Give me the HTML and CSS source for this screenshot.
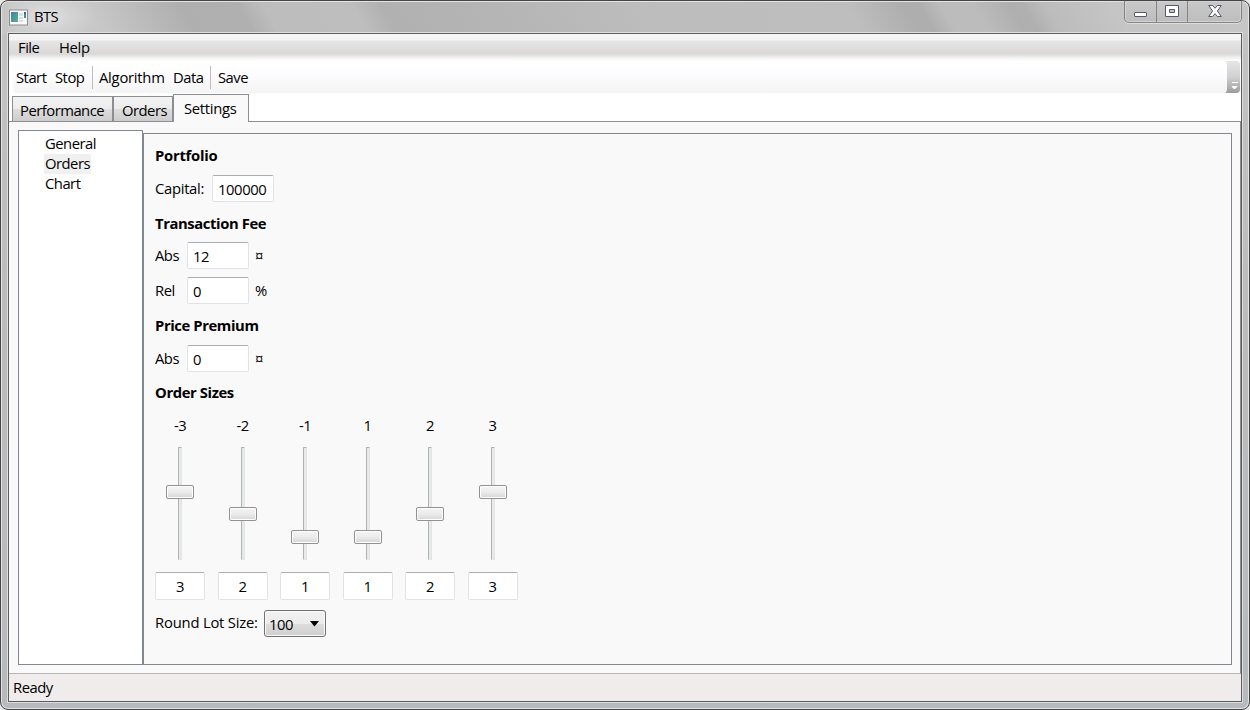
FILE: index.html
```html
<!DOCTYPE html>
<html lang="en">
<head>
<meta charset="utf-8">
<title>BTS</title>
<link rel="stylesheet" href="styles.css">
</head>
<body>
<div class="window">
  <header class="titlebar">
    <svg class="app-icon" width="20" height="17" viewBox="0 0 20 17">
      <defs><linearGradient id="g" x1="0" y1="0" x2="1" y2="1"><stop offset="0" stop-color="#4a7cae"/><stop offset="1" stop-color="#52b586"/></linearGradient></defs>
      <rect x=".5" y="1" width="18" height="15" fill="#fafafa" stroke="#8b8f94"/>
      <rect x="2" y="3" width="7" height="10" fill="url(#g)"/>
      <path d="M10 4h4v3h-4zM10 8h4v2h-4zM10 11h4v2h-4z" fill="#dedede"/>
      <rect x="15" y="3" width="2" height="6" fill="#438f9d"/><rect x="15" y="3" width="2" height="2" fill="#3a5f9a"/>
    </svg>
    <span class="title">BTS</span>
    <div class="caption">
      <button class="cap min" aria-label="Minimize"><svg width="14" height="7" viewBox="0 0 14 7"><rect x=".5" y="1.500" width="12" height="4" rx=".5" fill="#fff" stroke="#555a70"/></svg></button>
      <button class="cap max" aria-label="Maximize"><svg width="14" height="12" viewBox="0 0 14 12"><path fill="#fff" fill-rule="evenodd" stroke="#555a70" d="M.5.5h13v11H.5zM4.500 4.500v3h5v-3z"/></svg></button>
      <button class="cap close" aria-label="Close"><svg width="14" height="12" viewBox="0 0 14 12"><path fill="#fff" stroke="#555a70" d="M.7.500h4L7 3.300 9.300.500h4L9.400 6l3.900 5.500h-4L7 8.700 4.700 11.500h-4L4.600 6z"/></svg></button>
    </div>
  </header>
  <main class="client">
    <nav class="menu"><span class="m-file">File</span><span class="m-help">Help</span></nav>
    <div class="toolbar">
      <span class="t-start">Start</span><span class="t-stop">Stop</span><i class="sep"></i><span class="t-alg">Algorithm</span><span class="t-data">Data</span><i class="sep"></i><span class="t-save">Save</span>
      <svg class="overflow" width="16" height="32" viewBox="0 0 16 32"><defs><linearGradient id="o" x1="0" y1="0" x2="0" y2="1"><stop offset="0" stop-color="#e6e6e6"/><stop offset=".5" stop-color="#d0d0d0"/><stop offset="1" stop-color="#9c9c9c"/></linearGradient></defs><path d="M0 0h11q4 0 4 4v24q0 4-4 4H0q2-1 2-4V4q0-3-2-4z" fill="url(#o)"/><path d="M7 21.500h6" stroke="#fff"/><path d="M7 25.500h5l-2.500 2.500z" fill="#fff" stroke="#fff"/></svg>
    </div>
    <div class="tabs"><div class="tab perf"><span>Performance</span></div><div class="tab ord"><span>Orders</span></div><div class="tab active"><span>Settings</span></div></div>
    <section class="page">
      <ul class="tree"><li><span>General</span></li><li><span class="sel">Orders</span></li><li><span>Chart</span></li></ul>
      <div class="panel">
        <h2 class="h-port">Portfolio</h2>
        <div class="row"><label class="l-cap">Capital:</label><div class="box">100000</div></div>
        <h2 class="h-fee">Transaction Fee</h2>
        <div class="row fee"><label class="l-abs">Abs</label><div class="box">12</div><span class="unit">¤</span></div>
        <div class="row"><label class="l-abs">Rel</label><div class="box">0</div><span class="unit">%</span></div>
        <h2 class="h-prem">Price Premium</h2>
        <div class="row"><label class="l-abs">Abs</label><div class="box">0</div><span class="unit">¤</span></div>
        <h2 class="h-size">Order Sizes</h2>
        <div class="sliders">
          <div class="slider"><span class="name">-3</span><div class="track"><i class="thumb v3"></i></div><div class="box value">3</div></div>
          <div class="slider"><span class="name">-2</span><div class="track"><i class="thumb v2"></i></div><div class="box value">2</div></div>
          <div class="slider"><span class="name">-1</span><div class="track"><i class="thumb v1"></i></div><div class="box value">1</div></div>
          <div class="slider"><span class="name">1</span><div class="track"><i class="thumb v1"></i></div><div class="box value">1</div></div>
          <div class="slider"><span class="name">2</span><div class="track"><i class="thumb v2"></i></div><div class="box value">2</div></div>
          <div class="slider"><span class="name">3</span><div class="track"><i class="thumb v3"></i></div><div class="box value">3</div></div>
        </div>
        <div class="row lot"><label class="l-lot">Round Lot Size:</label><div class="combo"><span>100</span><svg width="9" height="6" viewBox="0 0 9 6"><path d="M0 0h9L4.500 5.500z"/></svg></div></div>
      </div>
    </section>
    <footer class="status">Ready</footer>
  </main>
</div>
</body>
</html>
```
FILE: styles.css
```css
* { box-sizing: border-box; }
body { margin: 0; width: 1250px; height: 710px; overflow: hidden; background: #e8e8e8; color: #000; font: 14.8px/18px "Open Sans", "Noto Sans", sans-serif; letter-spacing: -0.5px; }
span, label, h2 { white-space: nowrap; }
.window { height: 710px; border: 1px solid #454545; border-radius: 8px; padding: 0 7px 7px; display: flex; flex-direction: column; box-shadow: inset 0 0 0 1px #e4e4e4; background: linear-gradient(60deg, #c6c6c6 0, #c8c8c8 8%, #afafaf 15.5%, #b0b0b0 20%, #bdbdbd 22%, #bebebe 29%, #b1b1b1 31.3%, #b5b5b5 40%, #bdbdbd 52%, #bebebe 68%, #aeaeae 72.5%, #aeaeae 73.8%, #bcbcbc 75.5%, #bcbcbc 78%, #afafaf 81%, #b0b0b0 82%, #bcbcbc 83.7%, #c5c5c5 89%, #c6c6c6 100%) 0 0 / 100% 33px no-repeat, linear-gradient(#c3c3c3, #bbbbbb 50%, #b7babd); }
.titlebar { height: 32px; flex: none; display: flex; padding: 0 0 0 1px; background: radial-gradient(ellipse 50px 26px at 38px 16px, #e2e2e2 0, #dadada99 50%, #d4d4d400 100%); }
.app-icon { margin-top: 8px; }
.title { margin: 6px 0 0 5px; letter-spacing: -0.6px; }
.caption { margin-left: auto; width: 118px; height: 22px; display: flex; border: 1px solid #858585; border-top: 0; border-radius: 0 0 5px 5px; box-shadow: 0 1px 0 #dedede, inset 0 0 0 1px #d2d2d2; background: linear-gradient(#c9c9c9, #bdbdbd); }
.cap { border: 0; background: none; padding: 0; display: flex; justify-content: center; align-items: flex-start; }
.min { width: 32px; border-right: 1px solid #858585; padding-top: 10px; }
.max { width: 31px; border-right: 1px solid #858585; padding-top: 4px; }
.close { flex: 1; padding-top: 4px; }
.client { flex: 1; min-height: 0; border: 1px solid #5b5b60; background: #fff; display: flex; flex-direction: column; box-shadow: 0 0 0 1px #dedede; }
.menu { height: 27px; flex: none; display: flex; padding: 4px 0 0 9px; background: linear-gradient(#f6f6f6 0, #f4f4f4 6px, #e6e5e5 7px, #d9d8d7 20px, #eee 23px, #fff 27px); }
.m-file { width: 41px; }
.m-help { letter-spacing: -0.3px; }
.toolbar { height: 32px; flex: none; margin-left: 4px; position: relative; display: flex; align-items: center; padding-left: 3px; border-radius: 4px; background: linear-gradient(#fff, #fdfcfe 40%, #f4f4f4); }
.t-start { width: 39px; }
.t-stop { width: 37px; }
.sep { width: 1px; height: 23px; background: #bdbdbd; margin-right: 6px; }
.t-alg { width: 74px; letter-spacing: -0.25px; }
.t-data { width: 37px; }
.t-save { padding-left: 1px; }
.overflow { position: absolute; right: 0; top: 0; }
.tabs { height: 28px; flex: none; display: flex; align-items: flex-end; padding: 0 0 0 3px; background: #fff; position: relative; z-index: 1; }
.tab { border: 1px solid #8c8e94; border-bottom: 0; height: 25px; padding: 4px 0 0 7px; background: linear-gradient(#f3f3f3, #ebebeb 50%, #dddddd 51%, #cdcdcd); }
.perf { width: 101px; letter-spacing: -0.5px; }
.ord { width: 60px; padding-left: 8px; }
.active { width: 76px; height: 28px; margin-bottom: -1px; padding: 4px 0 0 10px; background: #f9f9f9; letter-spacing: -0.3px; }
.page { flex: 1; min-height: 0; border: 1px solid #8c8e94; border-left-width: 0; border-bottom-color: #b5b5ba; background: #f9f9f9; display: flex; padding: 8px 8px 8px 9px; }
.tree { list-style: none; margin: 0; padding: 3px 0 0 25px; width: 125px; border: 1px solid #828790; background: #fff; }
.tree li { height: 20px; }
.tree span { display: inline-block; height: 20px; padding: 0 1px; }
.sel { background: #f0f0f0; }
.panel { flex: 1; margin-top: 3px; border: 1px solid #828790; padding: 12px 0 0 11px; }
h2 { font-size: 14.8px; line-height: 18px; height: 20px; font-weight: 700; margin: 0; letter-spacing: -0.4px; }
.h-port { margin-bottom: 9px; letter-spacing: -0.25px; }
.h-fee { margin: 12px 0 8px; }
.h-prem { margin: 12px 0 9px; }
.h-size { margin: 11px 0 13px; }
.row { height: 27px; display: flex; }
.row label, .unit { padding-top: 4px; }
.fee { margin-bottom: 8px; }
.l-cap { width: 57px; letter-spacing: -0.3px; }
.l-abs { width: 32px; }
.l-lot { width: 109px; letter-spacing: -0.2px; }
.box { width: 62px; height: 27px; background: #fff; border: 1px solid #e2e3ea; border-top-color: #abadb3; border-radius: 2px; padding: 4px 0 0 5px; letter-spacing: -0.4px; }
.unit { margin-left: 6px; }
.sliders { display: flex; gap: 12.5px; }
.slider { width: 50px; display: flex; flex-direction: column; align-items: center; }
.name { height: 31px; }
.track { width: 4px; height: 113px; border: 1px solid #e3e4e4; border-left-color: #b0b1b1; border-top-color: #b0b1b1; border-radius: 1px; background: #e7eaea; position: relative; }
.thumb { position: absolute; left: -13px; width: 28px; height: 14px; border: 1px solid #929292; border-radius: 2px; box-shadow: inset 0 0 0 1px #fff; background: linear-gradient(#f4f4f4, #ececec 50%, #d5d5d5); }
.v3 { top: 37px; }
.v2 { top: 59px; }
.v1 { top: 82px; }
.value { width: 50px; height: 28px; margin-top: 12px; padding-left: 0; text-align: center; }
.lot { margin-top: 10px; }
.lot label { padding-top: 3px; }
.combo { width: 62px; height: 27px; border: 1px solid #707070; border-radius: 3px; box-shadow: inset 0 0 0 1px #fafafa; background: linear-gradient(#f2f2f2, #ebebeb 50%, #dddddd 51%, #cfcfcf); display: flex; justify-content: space-between; padding: 4px 6px 0 4px; }
.combo svg { margin-top: 6px; }
.status { height: 27px; flex: none; background: #f0ecec; padding: 4px 0 0 4px; }
```
